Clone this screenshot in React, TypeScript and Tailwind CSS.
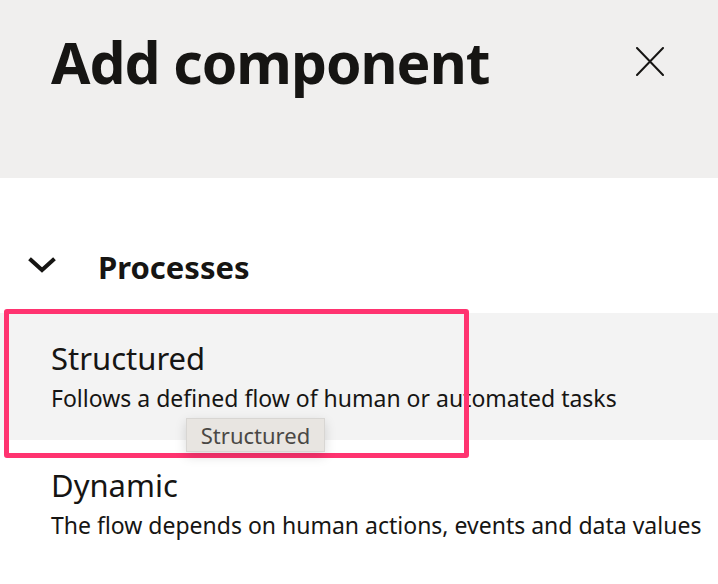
const items = [
  { title: "Structured", desc: "Follows a defined flow of human or automated tasks", active: true },
  { title: "Dynamic", desc: "The flow depends on human actions, events and data values", active: false },
];

export default function App() {
  return (
    <div className="w-[718px] h-[584px] overflow-hidden bg-white text-[#161513] font-['Noto_Sans',sans-serif]">
      <header className="h-[178px] bg-[#f0efee] flex items-start justify-between pl-[51px] pr-[54px] pt-[27px]">
        <h1 className="text-[57px] leading-[70px] font-bold tracking-[-1px]">Add component</h1>
        <button className="mt-[20px]">
          <svg width="28" height="29" viewBox="0 0 28 29" fill="none" stroke="currentColor" strokeWidth="2" strokeLinecap="round">
            <path d="M1 1 27 28M27 1 1 28" />
          </svg>
        </button>
      </header>

      <section className="pt-[69px]">
        <div className="flex items-start h-[40px] pl-[28px]">
          <svg className="mt-[10px]" width="28" height="16" viewBox="0 0 28 16" fill="none" stroke="currentColor" strokeWidth="4" strokeLinecap="square">
            <path d="M3 3 14 13 25 3" />
          </svg>
          <h2 className="ml-[42px] text-[31px] font-bold leading-[40px]">Processes</h2>
        </div>

        <div className="mt-[26px] flex flex-col">
          {items.map(item => (
            <div key={item.title} className="relative">
              <div className={`pl-[51px] pt-[26px] h-[127px] ${item.active ? "bg-[#f3f3f3]" : ""}`}>
                <div className="text-[31px] leading-[38px]">{item.title}</div>
                <div className="mt-[6px] text-[23px] leading-[30px]">{item.desc}</div>
              </div>
              {item.active && (
                <>
                  <div className="absolute left-[4px] top-[-4px] w-[465px] h-[149px] border-[5px] border-[#ff3370] rounded-[3px]" />
                  <div className="absolute left-[186px] top-[105px] w-[139px] h-[34px] flex items-center justify-center bg-[#e8e5e1] text-[#4a4845] text-[22px] border border-[#d8d6d3] shadow-[0_4px_12px_rgba(0,0,0,0.15)]">
                    {item.title}
                  </div>
                </>
              )}
            </div>
          ))}
        </div>
      </section>
    </div>
  );
}
